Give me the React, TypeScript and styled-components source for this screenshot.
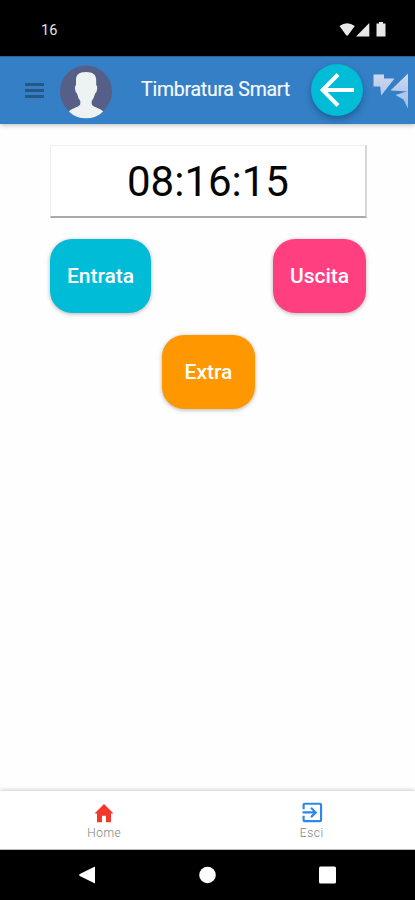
import React from 'react';
import styled, { createGlobalStyle } from 'styled-components';

const GlobalStyle = createGlobalStyle`
  * { box-sizing: border-box; }
  body { margin: 0; background: #fefefe; font-family: Roboto, "Liberation Sans", sans-serif; }
  button { font-family: inherit; border: 0; padding: 0; background: none; }
  svg { display: block; }
`;

const Screen = styled.div`
  width: 415px;
  height: 900px;
  display: flex;
  flex-direction: column;
  background: #fefefe;
  overflow: hidden;
`;

const StatusBar = styled.div`
  height: 56px;
  flex: none;
  background: #000;
  color: #e4e4e4;
  display: flex;
  justify-content: space-between;
  padding: 21px 28px 0 41px;
  font-size: 14.5px;
  line-height: 19px;
`;

const StatusIcons = styled.svg`
  width: 48px;
  height: 16px;
  margin-top: 1px;
`;

const Header = styled.header`
  height: 68px;
  flex: none;
  display: flex;
  align-items: center;
  background: #347fc5;
  border-top: 1px solid #28639b;
  box-shadow: 0 1px 5px rgba(0, 0, 0, 0.28);
  padding-left: 25px;
`;

const MenuButton = styled.button`
  width: 19px;
  height: 15px;
  display: flex;
  flex-direction: column;
  justify-content: space-between;
`;

const MenuLine = styled.span`
  width: 19px;
  height: 3px;
  background: #265886;
`;

const Avatar = styled.svg`
  width: 52px;
  height: 54px;
  margin: 2px 0 0 16px;
`;

const Title = styled.h1`
  width: 150px;
  margin: 0 0 2px 29px;
  font-size: 19.5px;
  font-weight: 400;
  line-height: 24px;
  letter-spacing: -0.25px;
  white-space: nowrap;
  color: #f4f9ff;
  -webkit-text-stroke: 0.2px #f4f9ff;
`;

const BackButton = styled.button`
  width: 52px;
  height: 52px;
  flex: none;
  margin: 0 0 1px 19.5px;
  border-radius: 50%;
  background: #00bcd6;
  box-shadow: 0 3px 6px rgba(10, 40, 90, 0.42);
  display: flex;
  align-items: center;
  justify-content: center;
`;

const Logo = styled.svg`
  width: 36px;
  height: 36px;
  flex: none;
  margin-left: 10px;
`;

const Content = styled.main`
  flex: 1;
  padding: 21px 49px 0 50px;
`;

const Clock = styled.div`
  height: 73px;
  margin-right: -1px;
  padding-top: 2px;
  background: #fff;
  border: solid;
  border-width: 1px 2px 2px 1px;
  border-color: #f0f0f0 #d6d6d6 #aaa #eee;
  display: flex;
  align-items: center;
  justify-content: center;
  font-size: 42px;
  line-height: 50px;
  color: #050505;
`;

const Actions = styled.div`
  margin-top: 21px;
  display: flex;
  justify-content: space-between;
`;

const ExtraRow = styled.div`
  margin: 21.5px -1px 0 0;
  display: flex;
  justify-content: center;
`;

const ActionButton = styled.button<{ $color: string; $width: number }>`
  width: ${({ $width }) => $width}px;
  height: 74px;
  border-radius: 22px;
  background: ${({ $color }) => $color};
  color: #fff;
  font-size: 21px;
  font-weight: 500;
  line-height: 24px;
  box-shadow: 0 1px 4px rgba(0, 0, 0, 0.3);
`;

const TabBar = styled.nav`
  height: 59px;
  flex: none;
  display: grid;
  grid-template-columns: 1fr 1fr;
  background: #fff;
  border-bottom: 1px solid #bbb;
  box-shadow: 0 -1px 4px rgba(0, 0, 0, 0.2);
`;

const Tab = styled.button`
  display: flex;
  flex-direction: column;
  align-items: center;
  padding: 10px 0 0 1px;
  color: #818181;
  font-size: 12px;
  font-weight: 300;
  line-height: 16px;
  letter-spacing: 0.5px;
`;

const TabIcon = styled.svg<{ $color: string }>`
  width: 24px;
  height: 24px;
  fill: ${({ $color }) => $color};
`;

const SystemNav = styled.div`
  height: 50px;
  flex: none;
  background: #000;
  display: flex;
  justify-content: space-between;
  align-items: center;
  padding: 0 79px;
`;

const NavIcon = styled.svg`
  width: 17px;
  height: 18px;
  fill: #fff;
`;

export default function App() {
  return (
    <>
      <GlobalStyle />
      <Screen>
        <StatusBar>
          <span>16</span>
          <StatusIcons viewBox="0 0 48 16" fill="#e8e8e8">
            <path d="M0.5 4 Q8 -1.5 15.8 4 L9.2 13 Q8.1 14.5 7 13Z" />
            <path d="M30.3 1V14.5H17Z" />
            <path d="M40 0h4v1.6h2.5V14.5H37.5V1.6H40Z" />
          </StatusIcons>
        </StatusBar>
        <Header>
          <MenuButton aria-label="Menu">
            <MenuLine />
            <MenuLine />
            <MenuLine />
          </MenuButton>
          <Avatar viewBox="0 0 52 54">
            <circle cx="26" cy="26.5" r="26" fill="#565f87" />
            <path
              d="M26 7C18.5 7 16 10 16 15V20Q14.6 21 15 24Q15.4 27.5 17 28.5Q18 33 20.3 36V39C20 42 13 42.5 8.8 46.4Q16 53.3 26 53.3T43.2 46.4C39 42.5 32 42 31.7 39V36Q34 33 35.2 28.5Q36.8 27.5 37.2 24Q37.6 21 36.2 20V15C36.2 10 33.5 7 26 7Z"
              fill="#edf2f3"
            />
          </Avatar>
          <Title>Timbratura Smart</Title>
          <BackButton aria-label="Indietro">
            <svg width="36" height="36" viewBox="0 0 36 36" fill="none" stroke="#fff" strokeWidth="4">
              <path d="M19 2.5 3.7 18 19 33.5M4 18H35" />
            </svg>
          </BackButton>
          <Logo viewBox="0 0 36 36">
            <defs>
              <linearGradient id="logoFill" gradientUnits="userSpaceOnUse" x1="0" y1="0" x2="0" y2="36">
                <stop offset="0" stopColor="#d0d8ef" />
                <stop offset="1" stopColor="#9fbde3" />
              </linearGradient>
            </defs>
            <g fill="url(#logoFill)">
              <path d="M0.5 1.5H11V5.5H21.5L8.2 22.5 7.2 13.5H0.5Z" />
              <path d="M35 0.5V18.5L17.5 17.5Z" />
              <path d="M22.5 22 35 18V35.5L30.5 26.5Z" />
            </g>
          </Logo>
        </Header>
        <Content>
          <Clock>08:16:15</Clock>
          <Actions>
            <ActionButton $color="#00bcd7" $width={101}>Entrata</ActionButton>
            <ActionButton $color="#ff3f80" $width={93}>Uscita</ActionButton>
          </Actions>
          <ExtraRow>
            <ActionButton $color="#ff9700" $width={93}>Extra</ActionButton>
          </ExtraRow>
        </Content>
        <TabBar>
          <Tab>
            <TabIcon $color="#f2372b" viewBox="0 0 24 24">
              <path d="M10 21.3v-6.5h4v6.5h5V12.5h2.5L12 3 2.5 12.5H5v8.8z" />
            </TabIcon>
            Home
          </Tab>
          <Tab>
            <TabIcon $color="#2f86ef" viewBox="0.7 1.5 22 22">
              <path d="M10.09 15.59 11.5 17l5-5-5-5-1.41 1.41L12.67 11H3v2h9.67zM19 3H5a2 2 0 0 0-2 2v4h2V5h14v14H5v-4H3v4a2 2 0 0 0 2 2h14a2 2 0 0 0 2-2V5a2 2 0 0 0-2-2z" />
            </TabIcon>
            Esci
          </Tab>
        </TabBar>
        <SystemNav>
          <NavIcon viewBox="0 0 17 18">
            <path d="M16 0.5V17.5L0.8 10Q-.5 9 .8 8Z" />
          </NavIcon>
          <NavIcon viewBox="0 0 17 18">
            <circle cx="8.5" cy="9" r="8.3" />
          </NavIcon>
          <NavIcon viewBox="0 0 17 18">
            <rect y="0.5" width="17" height="17" rx="1.5" />
          </NavIcon>
        </SystemNav>
      </Screen>
    </>
  );
}
